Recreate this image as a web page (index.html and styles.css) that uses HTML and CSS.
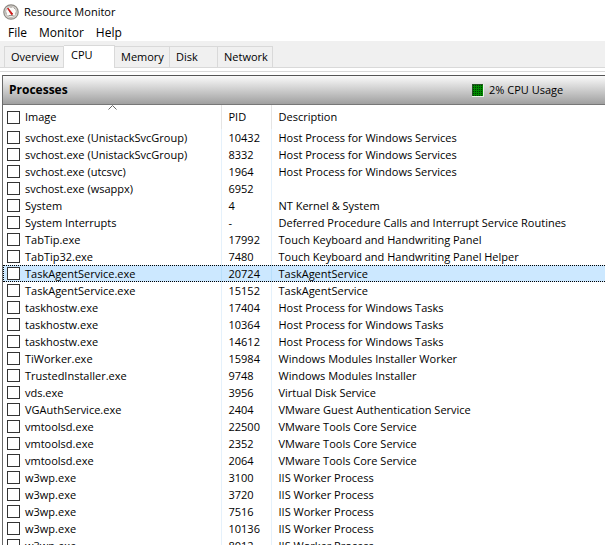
FILE: index.html
```html
<!DOCTYPE html>
<html lang="en">
<head>
<meta charset="utf-8">
<title>Resource Monitor</title>
<link rel="stylesheet" href="styles.css">
</head>
<body>
<header class="titlebar">
<svg class="app-icon" viewBox="0 0 16 16" width="16" height="16" aria-hidden="true">
<circle cx="8" cy="8" r="7.2" fill="#dedbd7" stroke="#8d8983" stroke-width="1.2"/>
<circle cx="8" cy="8" r="5.4" fill="#fbfaf8" stroke="#aaa49e" stroke-width=".8"/>
<path d="M5.5 11.5h5M4 9l-.8.2M12 9l.8.2M11 5l.7-.7M8 3v1" stroke="#8f8a84" stroke-width=".9" fill="none"/>
<path d="M5 4L9.8 10 8.6 10.8 4.6 4.6z" fill="#d01010" stroke="#c51010" stroke-width=".8"/>
</svg>
<h1>Resource Monitor</h1>
</header>
<nav class="menu"><button type="button">File</button><button type="button">Monitor</button><button type="button">Help</button></nav>
<div class="tabs" role="tablist">
<button type="button" role="tab" class="tab overview">Overview</button>
<button type="button" role="tab" class="tab cpu" aria-selected="true">CPU</button>
<button type="button" role="tab" class="tab memory">Memory</button>
<button type="button" role="tab" class="tab disk">Disk</button>
<button type="button" role="tab" class="tab network">Network</button>
</div>
<main class="page">
<section class="panel">
<div class="panel-head">
<h2>Processes</h2>
<div class="usage"><svg width="12" height="13" viewBox="0 0 12 13" aria-hidden="true"><defs><pattern id="grid" width="2" height="2" patternUnits="userSpaceOnUse"><path d="M0 0h2v2H0z" fill="#008a00"/><path d="M1 1h1v1H1z" fill="#003c00"/></pattern></defs><path d="M0 0h12v13H0z" fill="#e9f5e9"/><path d="M0 0h11v12H0z" fill="#245424"/><path d="M1 1h10v11H1z" fill="url(#grid)"/></svg><span>2% CPU Usage</span></div>
</div>
<table>
<colgroup><col class="c-image"><col class="c-pid"><col></colgroup>
<thead><tr><th class="sorted"><svg class="sort" width="9" height="5" viewBox="0 0 9 5" aria-hidden="true"><path d="M.5 4.5l4-4 4 4" fill="none" stroke="#666"/></svg><label><input type="checkbox">Image</label></th><th>PID</th><th>Description</th></tr></thead>
<tbody id="rows"></tbody>
</table>
</section>
</main>
<script src="rows.js"></script>
</body>
</html>
```
FILE: styles.css
```css
* { box-sizing: border-box; }
body { margin: 0; height: 100vh; overflow: hidden; display: flex; flex-direction: column; background: #fff; color: #000; font: 11px/16px "Open Sans", sans-serif; }
h1, h2 { margin: 0; }
button { font: inherit; color: inherit; border: 0; background: none; padding: 0; }
.titlebar { display: flex; align-items: center; gap: 5px; height: 24px; padding-left: 3px; flex: none; }
.titlebar h1 { font-size: 11px; font-weight: 400; }
.menu { display: flex; gap: 13px; height: 17px; padding-left: 8px; flex: none; font-size: 12px; }
.menu { font-size: 12px; gap: 12px; }
.tabs { display: flex; align-items: flex-end; height: 27px; padding-left: 4px; flex: none; background: #f0f0f0; border-bottom: 1px solid #d9d9d9; }
.tab { height: 21px; border: 1px solid #d9d9d9; border-left: 0; border-bottom: 0; padding: 0 0 0 6px; text-align: left; white-space: nowrap; }
.overview { width: 60px; border-left: 1px solid #d9d9d9; }
.cpu { width: 51px; height: 23px; margin-bottom: -1px; background: #fff; padding: 0 0 4px 7px; }
.memory { width: 55px; }
.disk { width: 48px; }
.network { width: 55px; }
.page { flex: 1; min-height: 0; margin-top: 3px; padding: 3px 0 0 2px; border-top: 1px solid #d9d9d9; }
.panel { height: 100%; border-left: 1px solid #696969; overflow: hidden; }
.panel-head { display: flex; align-items: center; height: 30px; padding-left: 6px; border-top: 1px solid #555; border-bottom: 1px solid #777; background: linear-gradient(#fafafa, #a0a0a0); }
.panel-head h2 { flex: 1; font-size: 12px; font-weight: 700; }
.usage { display: flex; align-items: center; gap: 5px; width: 133px; }
table { width: calc(100% + 2px); border-collapse: collapse; table-layout: fixed; }
.c-image { width: 218px; }
.c-pid { width: 50px; }
th, td { height: 17px; padding: 0 0 0 7px; font-weight: 400; text-align: left; white-space: nowrap; line-height: 16px; border-left: 1px solid #e5f1fb; }
th { height: 24px; border-color: #e5e5e5; }
th:first-child, td:first-child { padding-left: 4px; border-left: 0; }
.sorted { position: relative; }
.sort { position: absolute; left: 105px; top: 0; }
label { display: flex; align-items: center; gap: 5px; }
input { appearance: none; width: 13px; height: 13px; margin: 0; border: 1px solid #333; background: #fff; }
.selected { background: #cce8ff; outline: 1px dotted #000; outline-offset: -1px; }
.selected td { border-color: #b8dffb; }
```
FILE: rows.js
```js
const processes = [
  ["svchost.exe (UnistackSvcGroup)", "10432", "Host Process for Windows Services"],
  ["svchost.exe (UnistackSvcGroup)", "8332", "Host Process for Windows Services"],
  ["svchost.exe (utcsvc)", "1964", "Host Process for Windows Services"],
  ["svchost.exe (wsappx)", "6952", ""],
  ["System", "4", "NT Kernel & System"],
  ["System Interrupts", "-", "Deferred Procedure Calls and Interrupt Service Routines"],
  ["TabTip.exe", "17992", "Touch Keyboard and Handwriting Panel"],
  ["TabTip32.exe", "7480", "Touch Keyboard and Handwriting Panel Helper"],
  ["TaskAgentService.exe", "20724", "TaskAgentService"],
  ["TaskAgentService.exe", "15152", "TaskAgentService"],
  ["taskhostw.exe", "17404", "Host Process for Windows Tasks"],
  ["taskhostw.exe", "10364", "Host Process for Windows Tasks"],
  ["taskhostw.exe", "14612", "Host Process for Windows Tasks"],
  ["TiWorker.exe", "15984", "Windows Modules Installer Worker"],
  ["TrustedInstaller.exe", "9748", "Windows Modules Installer"],
  ["vds.exe", "3956", "Virtual Disk Service"],
  ["VGAuthService.exe", "2404", "VMware Guest Authentication Service"],
  ["vmtoolsd.exe", "22500", "VMware Tools Core Service"],
  ["vmtoolsd.exe", "2352", "VMware Tools Core Service"],
  ["vmtoolsd.exe", "2064", "VMware Tools Core Service"],
  ["w3wp.exe", "3100", "IIS Worker Process"],
  ["w3wp.exe", "3720", "IIS Worker Process"],
  ["w3wp.exe", "7516", "IIS Worker Process"],
  ["w3wp.exe", "10136", "IIS Worker Process"],
  ["w3wp.exe", "8012", "IIS Worker Process"],
];
const body = document.getElementById("rows");
processes.forEach(([image, pid, description], index) => {
  const row = body.insertRow();
  if (index === 8) row.className = "selected";
  const label = document.createElement("label");
  const box = document.createElement("input");
  box.type = "checkbox";
  label.append(box, image);
  row.insertCell().append(label);
  row.insertCell().textContent = pid;
  row.insertCell().textContent = description;
});
```
